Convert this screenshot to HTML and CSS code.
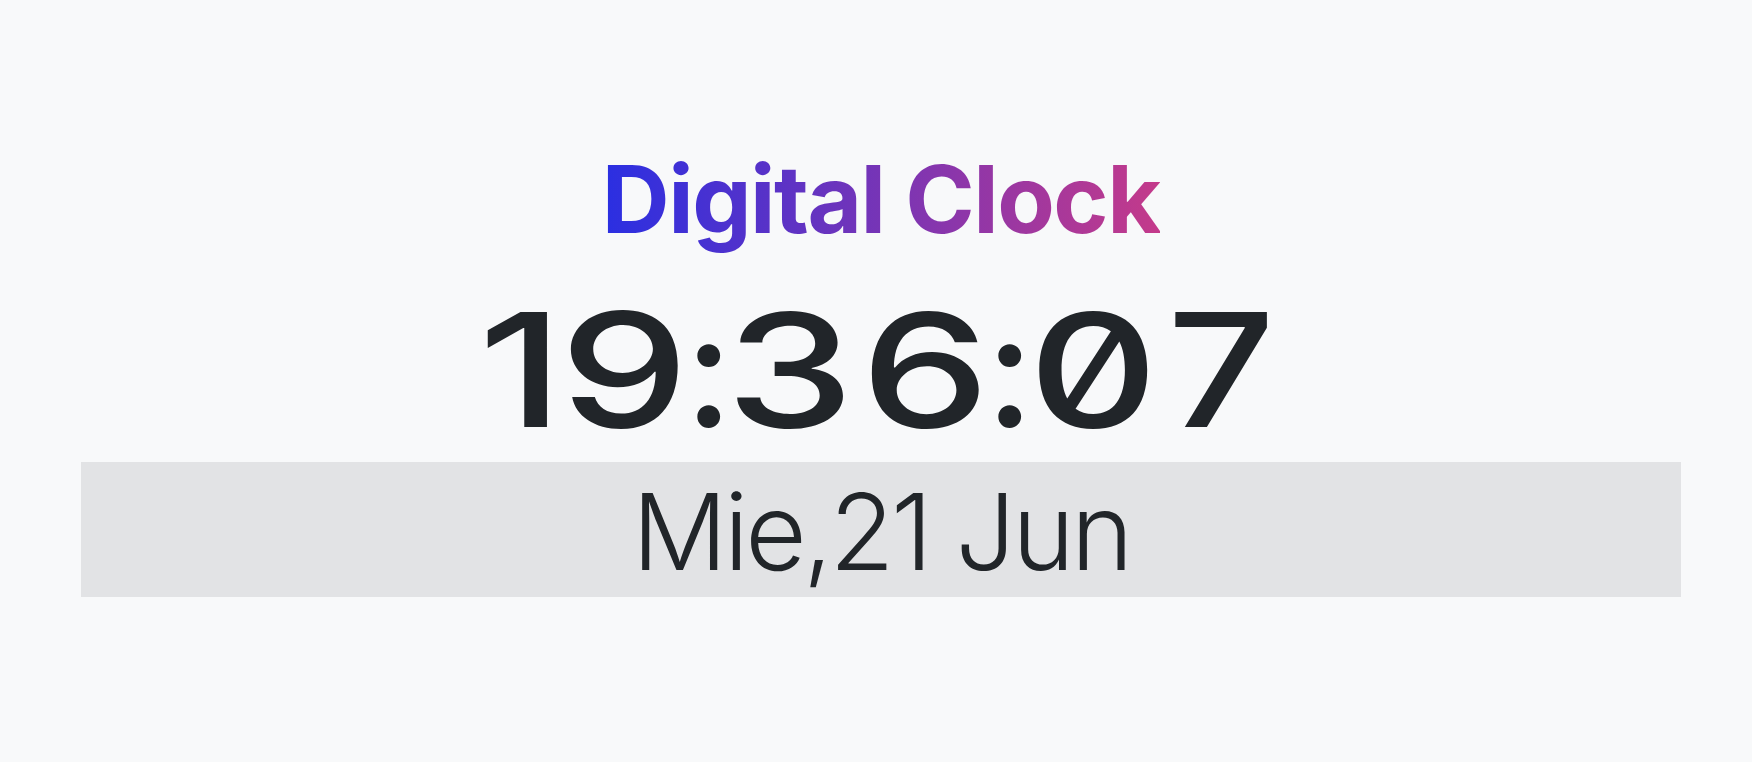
FILE: index.html
```html
<!DOCTYPE html>
<html lang="es">
<head>
<meta charset="utf-8">
<title>Digital Clock</title>
<link rel="stylesheet" href="styles.css">
</head>
<body>
<main class="page">
  <h1 class="title">Digital Clock</h1>
  <div class="clock">
    <span class="d d-one"><span class="g g-one">1</span></span><span class="d"><span class="g">9</span></span><span class="c">:</span><span class="d"><span class="g">3</span></span><span class="d"><span class="g">6</span></span><span class="c">:</span><span class="d"><span class="g">0</span></span><span class="d"><span class="g g-seven">7</span></span>
  </div>
  <div class="date"><span class="date-text">Mie,21 Jun</span></div>
</main>
</body>
</html>
```
FILE: styles.css
```css
html, body {
  margin: 0;
  background: #f8f9fa;
}

.page {
  display: flex;
  flex-direction: column;
  align-items: center;
  margin: 0 71px 0 81px;
  padding-top: 143px;
}

.title {
  margin: 0;
  font-family: Inter, "Noto Sans", sans-serif;
  font-weight: 700;
  font-size: 94px;
  line-height: 113px;
  letter-spacing: -1.5px;
  background: linear-gradient(90deg, #2a2fe2, #c43a8a);
  -webkit-background-clip: text;
  background-clip: text;
  color: transparent;
}

.clock {
  display: flex;
  margin-top: 35px;
  padding-right: 44px;
  height: 158px;
  font-family: Inter, "Noto Sans", sans-serif;
  font-weight: 460;
  font-size: 158px;
  line-height: 158px;
  color: #212529;
  font-feature-settings: "tnum" 1, "zero" 1;
}

.d {
  width: 133px;
  display: flex;
  justify-content: center;
}

.d-one {
  justify-content: flex-end;
  padding-right: 4px;
  box-sizing: border-box;
}

.g {
  display: inline-block;
  transform: scaleX(1.3);
}

.g-one {
  font-feature-settings: "tnum" 0;
}

.g-seven {
  transform: scaleX(1.2);
  margin-right: 10px;
}

.c {
  width: 35px;
  display: flex;
  justify-content: center;
}

.date {
  align-self: stretch;
  margin-top: 13px;
  height: 135px;
  box-sizing: border-box;
  padding-top: 4px;
  background: #e2e3e5;
  display: flex;
  align-items: center;
  justify-content: center;
  font-family: Inter, "Noto Sans", sans-serif;
  font-weight: 300;
  font-size: 106px;
  letter-spacing: -3.5px;
  color: #212529;
}
```
